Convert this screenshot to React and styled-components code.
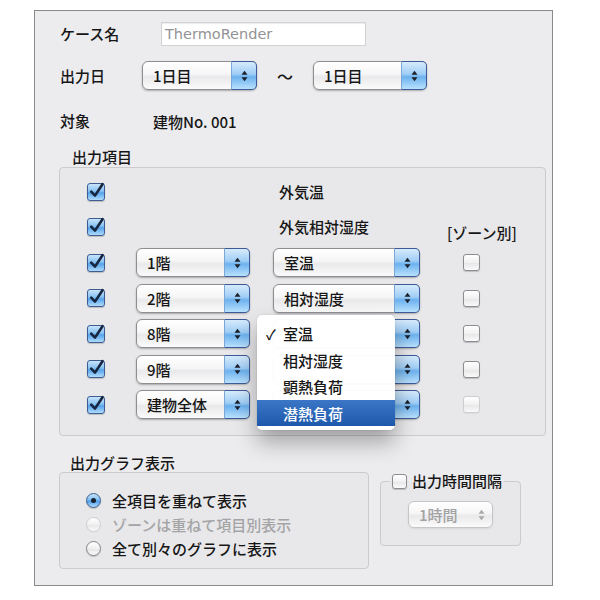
import React from 'react';
import styled, { createGlobalStyle } from 'styled-components';

const GlobalStyle = createGlobalStyle`
  body {
    margin: 0;
    background: #ffffff;
    font-family: "Noto Sans CJK JP", "Noto Sans", sans-serif;
  }
`;

const Window = styled.div`
  box-sizing: border-box;
  width: 519px;
  height: 576px;
  margin: 10px 0 0 34px;
  border: 1px solid #8a8a8a;
  background: #ececee;
  padding: 11px 5px 0 24px;
  color: #161616;
  font-size: 15px;
  font-weight: 500;
`;

const FormRow = styled.div`
  display: flex;
  align-items: center;
  height: ${(p) => p.$h}px;
  margin-top: ${(p) => p.$top || 0}px;
  padding-left: 1px;
`;

const Label = styled.span`
  width: ${(p) => p.$w}px;
  flex: none;
  line-height: 20px;
`;

const TextField = styled.div`
  box-sizing: border-box;
  width: 205px;
  height: 24px;
  background: #fff;
  border: 1px solid #d2d2d4;
  box-shadow: inset 0 1px 1px rgba(0, 0, 0, 0.08);
  padding-left: 3px;
  display: flex;
  align-items: center;
  font-family: "DejaVu Sans", sans-serif;
  font-weight: 400;
  font-size: 14.5px;
  color: #939395;
`;

const Tilde = styled.span`
  width: 56px;
  text-align: center;
  font-size: 16px;
`;

const PopupBox = styled.div`
  position: relative;
  box-sizing: border-box;
  width: ${(p) => p.$w}px;
  height: ${(p) => p.$h || 29}px;
  display: flex;
  border: 1px solid ${(p) => (p.$disabled ? '#c6c6c8' : '#8e8e92')};
  border-radius: 6px;
  background: linear-gradient(#ffffff, #f6f6f6 45%, #e9e9eb 55%, #fbfbfb);
  box-shadow: 0 1px 2px rgba(0, 0, 0, ${(p) => (p.$disabled ? 0.08 : 0.28)});
  color: ${(p) => (p.$disabled ? '#a2a2a4' : '#161616')};
`;

const PopupText = styled.span`
  flex: 1;
  display: flex;
  align-items: center;
  padding-left: 10px;
  white-space: nowrap;
`;

const PopupArrows = styled.span`
  width: 24px;
  flex: none;
  display: flex;
  align-items: center;
  justify-content: center;
  border-radius: 0 5px 5px 0;
  margin: -1px -1px -1px 0;
  border: ${(p) => (p.$disabled ? 'none' : '1px solid #3f5a98')};
  border-left: ${(p) => (p.$disabled ? 'none' : '1px solid #7aa7d8')};
  background: ${(p) =>
    p.$disabled
      ? 'transparent'
      : 'linear-gradient(#d6ebfc, #9fcdf5 45%, #6cb1ee 55%, #b9e1fd)'};
`;

const Arrows = ({ color }) => (
  <svg width="7" height="12" viewBox="0 0 8 14">
    <polygon points="4,1 7.5,5.5 0.5,5.5" fill={color} />
    <polygon points="0.5,8.5 7.5,8.5 4,13" fill={color} />
  </svg>
);

const Popup = ({ w, h, value, disabled, children }) => (
  <PopupBox $w={w} $h={h} $disabled={disabled}>
    <PopupText>{value}</PopupText>
    <PopupArrows $disabled={disabled}>
      <Arrows color={disabled ? '#a8a8aa' : '#1a1f2a'} />
    </PopupArrows>
    {children}
  </PopupBox>
);

const CheckBox = styled.span`
  box-sizing: border-box;
  display: inline-flex;
  width: ${(p) => p.$size}px;
  height: ${(p) => p.$size}px;
  flex: none;
  border-radius: 3px;
  border: 1px solid
    ${(p) => (p.$checked ? '#3d5d92' : p.$disabled ? '#cdcdcf' : '#8c8c90')};
  background: ${(p) =>
    p.$checked
      ? 'linear-gradient(#c8e4fb, #86c1f2 45%, #55a2ea 55%, #b0dcfc)'
      : 'linear-gradient(#ffffff, #f1f1f1 50%, #e6e6e8 52%, #fafafa)'};
  box-shadow: 0 1px 1px rgba(0, 0, 0, ${(p) => (p.$disabled ? 0.04 : 0.18)});
  overflow: visible;
`;

const Check = ({ checked, disabled, size = 18 }) => (
  <CheckBox $checked={checked} $disabled={disabled} $size={size}>
    {checked && (
      <svg width={size} height={size} viewBox="0 0 18 18" style={{ overflow: 'visible', margin: -1 }}>
        <path d="M4.2 8.6 L8 12.6 L15.5 1.2" fill="none" stroke="#17263e" strokeWidth="2.6" strokeLinecap="round" strokeLinejoin="round" />
      </svg>
    )}
  </CheckBox>
);

const SectionTitle = styled.div`
  margin: ${(p) => p.$top}px 0 0 ${(p) => p.$left}px;
  line-height: 18px;
  height: 18px;
`;

const GroupBox = styled.div`
  box-sizing: border-box;
  width: ${(p) => p.$w}px;
  height: ${(p) => p.$h}px;
  border: 1px solid #cbcbce;
  border-radius: 4px;
  background: #e8e8ea;
`;

const ItemGrid = styled(GroupBox)`
  margin-top: 1px;
  padding: 6px 0 0 27px;
  display: grid;
  grid-template-columns: 49px 137px 190px 1fr;
  grid-auto-rows: 35.5px;
  align-items: center;
`;

const ItemText = styled.span`
  padding-left: 6px;
  line-height: 20px;
  white-space: nowrap;
`;

const ZoneHeader = styled.span`
  align-self: end;
  margin: 0 0 2px -16px;
  line-height: 20px;
  white-space: nowrap;
`;

const Menu = styled.div`
  position: absolute;
  top: -5px;
  left: -17px;
  width: 138px;
  box-sizing: border-box;
  padding: 5px 0 4px;
  background: rgba(255, 255, 255, 0.97);
  border-radius: 5px;
  box-shadow: 0 0 1px rgba(0, 0, 0, 0.35), 0 12px 22px rgba(0, 0, 0, 0.32);
  z-index: 10;
  color: #161616;
`;

const MenuItem = styled.div`
  position: relative;
  height: 26.5px;
  display: flex;
  align-items: center;
  padding-left: 26px;
  color: ${(p) => (p.$active ? '#ffffff' : 'inherit')};
  background: ${(p) => (p.$active ? 'linear-gradient(#3b76c6, #1d58ab)' : 'transparent')};
`;

const Tick = styled.span`
  position: absolute;
  left: 9px;
  font-size: 14px;
`;

const BottomRow = styled.div`
  display: flex;
  align-items: flex-start;
  margin-top: 18px;
`;

const Column = styled.div`
  display: flex;
  flex-direction: column;
`;

const RadioBox = styled(GroupBox)`
  padding: 15px 0 0 26px;
`;

const RadioRow = styled.div`
  display: flex;
  align-items: center;
  gap: 11px;
  height: 24px;
  color: ${(p) => (p.$disabled ? '#a4a4a6' : '#161616')};
  white-space: nowrap;
`;

const RadioDot = styled.span`
  box-sizing: border-box;
  width: 15px;
  height: 15px;
  flex: none;
  border-radius: 50%;
  display: flex;
  align-items: center;
  justify-content: center;
  border: 1px solid
    ${(p) => (p.$on ? '#3d5d92' : p.$disabled ? '#cfcfd2' : '#838387')};
  background: ${(p) =>
    p.$on
      ? 'linear-gradient(#c8e4fb, #7fbcf1 45%, #4d9de9 55%, #b0dcfc)'
      : 'linear-gradient(#ffffff, #f0f0f0 50%, #e6e6e8 52%, #fafafa)'};
  box-shadow: 0 1px 1px rgba(0, 0, 0, ${(p) => (p.$disabled ? 0.03 : 0.18)});

  &::after {
    content: '';
    display: ${(p) => (p.$on ? 'block' : 'none')};
    width: 5px;
    height: 5px;
    border-radius: 50%;
    background: #16202e;
  }
`;

const Fieldset = styled.fieldset`
  box-sizing: border-box;
  width: 141px;
  height: 74px;
  margin: 18px 0 0 11px;
  padding: 0;
  min-inline-size: 0;
  border: 1px solid #cbcbce;
  border-radius: 4px;
  background: #e8e8ea;
`;

const Legend = styled.legend`
  display: flex;
  align-items: center;
  gap: 5px;
  margin-left: 9px;
  padding: 0 2px;
  line-height: 18px;
  white-space: nowrap;
`;

const Center = styled.div`
  display: flex;
  justify-content: center;
  margin-top: 11px;
`;

// rows whose item popup sits under the open menu show no label
const floors = [
  { floor: '1階', item: '室温' },
  { floor: '2階', item: '相対湿度' },
  { floor: '8階', item: '', open: true },
  { floor: '9階', item: '' },
  { floor: '建物全体', item: '', zoneDisabled: true },
];

const menuItems = ['室温', '相対湿度', '顕熱負荷', '潜熱負荷'];

const radios = [
  { label: '全項目を重ねて表示', on: true },
  { label: 'ゾーンは重ねて項目別表示', disabled: true },
  { label: '全て別々のグラフに表示' },
];

export default function App() {
  return (
    <>
      <GlobalStyle />
      <Window>
        <FormRow $h={24}>
          <Label $w={101}>ケース名</Label>
          <TextField>ThermoRender</TextField>
        </FormRow>
        <FormRow $h={29} $top={15}>
          <Label $w={82}>出力日</Label>
          <Popup w={115} value="1日目" />
          <Tilde>～</Tilde>
          <Popup w={114} value="1日目" />
        </FormRow>
        <FormRow $h={20} $top={21}>
          <Label $w={93}>対象</Label>
          <span>建物No. 001</span>
        </FormRow>

        <SectionTitle $top={17} $left={13}>出力項目</SectionTitle>
        <ItemGrid $w={487} $h={269}>
          <Check checked />
          <span />
          <ItemText>外気温</ItemText>
          <span />

          <Check checked />
          <span />
          <ItemText>外気相対湿度</ItemText>
          <ZoneHeader>[ゾーン別]</ZoneHeader>

          {floors.map((f) => (
            <React.Fragment key={f.floor}>
              <Check checked />
              <Popup w={114} value={f.floor} />
              <Popup w={147} value={f.item}>
                {f.open && (
                  <Menu>
                    {menuItems.map((m, i) => (
                      <MenuItem key={m} $active={i === 3}>
                        {i === 0 && <Tick>✓</Tick>}
                        {m}
                      </MenuItem>
                    ))}
                  </Menu>
                )}
              </Popup>
              <Check size={17} disabled={f.zoneDisabled} />
            </React.Fragment>
          ))}
        </ItemGrid>

        <BottomRow>
          <Column>
            <SectionTitle $top={0} $left={11}>出力グラフ表示</SectionTitle>
            <RadioBox $w={310} $h={97}>
              {radios.map((r) => (
                <RadioRow key={r.label} $disabled={r.disabled}>
                  <RadioDot $on={r.on} $disabled={r.disabled} />
                  {r.label}
                </RadioRow>
              ))}
            </RadioBox>
          </Column>
          <Fieldset>
            <Legend>
              <Check size={15} />
              出力時間間隔
            </Legend>
            <Center>
              <Popup w={85} h={27} value="1時間" disabled />
            </Center>
          </Fieldset>
        </BottomRow>
      </Window>
    </>
  );
}
